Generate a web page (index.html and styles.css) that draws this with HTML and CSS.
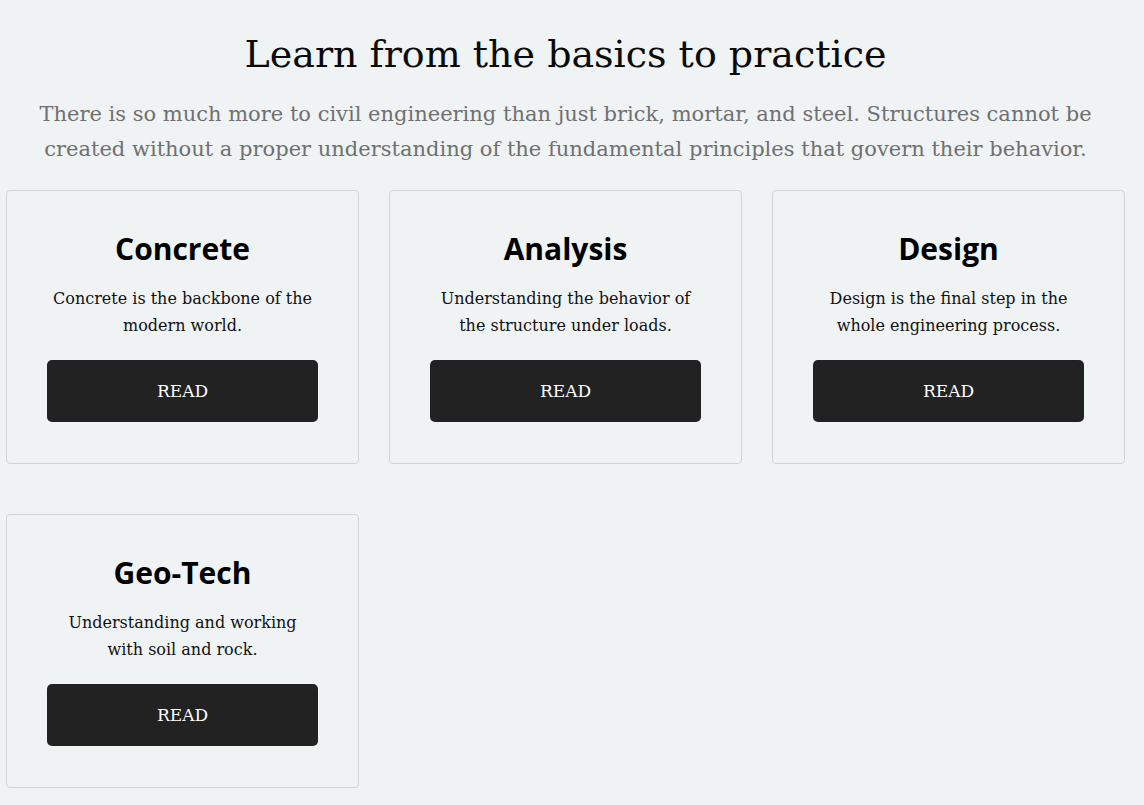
FILE: index.html
```html
<!DOCTYPE html>
<html lang="en">
<head>
<meta charset="utf-8">
<title>Learn from the basics to practice</title>
<link rel="stylesheet" href="styles.css">
</head>
<body>
<section class="learn">
  <h1 class="learn-title">Learn from the basics to practice</h1>
  <p class="learn-sub">There is so much more to civil engineering than just brick, mortar, and steel. Structures cannot be created without a proper understanding of the fundamental principles that govern their behavior.</p>
  <div class="cards">
    <div class="card">
      <h2 class="card-title">Concrete</h2>
      <p class="card-text">Concrete is the backbone of the modern world.</p>
      <a class="card-btn" href="#">READ</a>
    </div>
    <div class="card">
      <h2 class="card-title">Analysis</h2>
      <p class="card-text">Understanding the behavior of the structure under loads.</p>
      <a class="card-btn" href="#">READ</a>
    </div>
    <div class="card">
      <h2 class="card-title">Design</h2>
      <p class="card-text">Design is the final step in the whole engineering process.</p>
      <a class="card-btn" href="#">READ</a>
    </div>
    <div class="card">
      <h2 class="card-title">Geo-Tech</h2>
      <p class="card-text">Understanding and working with soil and rock.</p>
      <a class="card-btn" href="#">READ</a>
    </div>
  </div>
</section>
</body>
</html>
```
FILE: styles.css
```css
* { box-sizing: border-box; }
html, body { margin: 0; padding: 0; }
body {
  background: #eff3f4;
  font-family: "DejaVu Serif", "Liberation Serif", serif;
  color: #111;
}
.learn {
  padding: 26px 19px 20px 6px;
}
.learn-title {
  margin: 0;
  text-align: center;
  font-weight: 400;
  font-size: 38px;
  line-height: 56px;
  color: #0a0a0a;
}
.learn-sub {
  margin: 15px 0 0;
  text-align: center;
  font-size: 21px;
  line-height: 35px;
  color: #707070;
}
.cards {
  margin-top: 23px;
  display: grid;
  grid-template-columns: repeat(3, 1fr);
  column-gap: 30px;
  row-gap: 50px;
}
.card {
  border: 1px solid #cfd5d8;
  border-radius: 4px;
  padding: 38px 40px 41px;
  text-align: center;
  display: flex;
  flex-direction: column;
  align-items: stretch;
}
.card-title {
  margin: 0;
  font-family: "Open Sans", "Noto Sans", sans-serif;
  font-weight: 700;
  font-size: 30px;
  line-height: 40px;
  color: #000;
}
.card-text {
  margin: 16px 3px 0;
  font-size: 16px;
  line-height: 27px;
  color: #111;
}
.card-btn {
  margin-top: 21px;
  display: flex;
  align-items: center;
  justify-content: center;
  height: 62px;
  background: #222;
  border-radius: 5px;
  color: #fff;
  text-decoration: none;
  font-size: 17px;
}
```
